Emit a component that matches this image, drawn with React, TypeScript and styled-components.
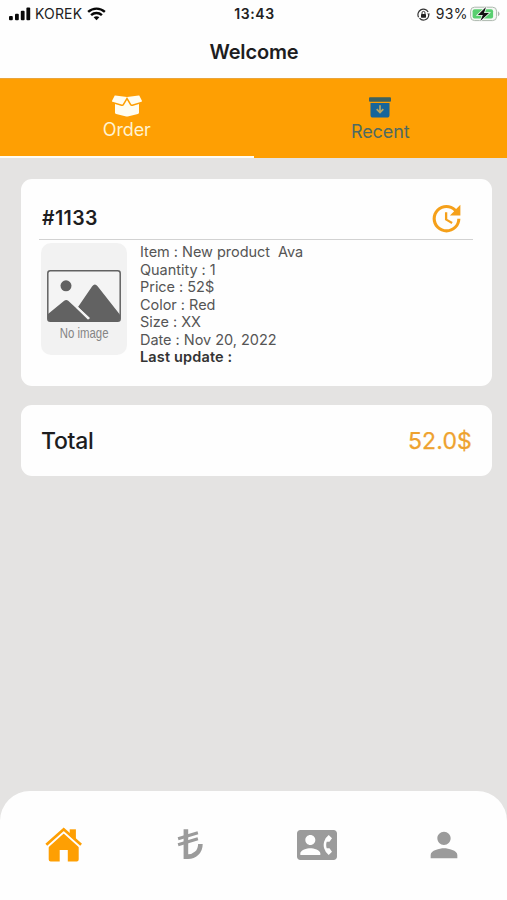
import React from "react";
import styled, { createGlobalStyle } from "styled-components";
import { MdContactPhone, MdPerson, MdUpdate } from "react-icons/md";
import { FaBoxOpen } from "react-icons/fa";

const ORANGE = "#fe9f03";

const GlobalStyle = createGlobalStyle`
  *, *::before, *::after { box-sizing: border-box; }
  body { margin: 0; background: #e4e3e2; font-family: Inter, "Liberation Sans", sans-serif; }
  svg { display: block; flex: none; }
`;

const Screen = styled.div`
  display: flex;
  flex-direction: column;
  width: 507px;
  height: 900px;
  overflow: hidden;
  background: #e4e3e2;
  color: #1d1d1f;
`;

const StatusBar = styled.div`
  display: grid;
  grid-template-columns: 1fr auto 1fr;
  align-items: center;
  height: 28px;
  padding: 0 7px 0 9px;
  background: #fefefe;
  font-size: 14px;
  line-height: 20px;
  color: #222;
`;

const StatusGroup = styled.div<{ $end?: boolean }>`
  display: flex;
  align-items: center;
  justify-content: ${(p) => (p.$end ? "flex-end" : "flex-start")};
  gap: 4px;
`;

const Carrier = styled.span`
  margin-right: 1px;
  letter-spacing: 0.15px;
`;

const Battery = styled.span`
  margin-left: 2px;
  margin-right: -2px;
  letter-spacing: 0.4px;
`;

const Clock = styled.span`
  font-weight: 600;
  letter-spacing: 0.6px;
`;

const TitleBar = styled.h1`
  display: flex;
  align-items: center;
  justify-content: center;
  height: 50px;
  margin: 0;
  padding: 0 0 2px 1px;
  background: #fefefe;
  font-size: 20px;
  font-weight: 600;
  letter-spacing: -0.15px;
`;

const Tabs = styled.div`
  display: flex;
  height: 80px;
  background: ${ORANGE};
  border-top: 1px solid #e9a53c;
`;

const Tab = styled.div<{ $active?: boolean }>`
  display: flex;
  flex: 1;
  flex-direction: column;
  align-items: center;
  padding-top: ${(p) => (p.$active ? 12 : 18)}px;
  border-bottom: ${(p) => (p.$active ? "2px solid #fffdf5" : "none")};
  color: ${(p) => (p.$active ? "#fff2cf" : "#4f6a62")};
`;

const TabLabel = styled.span<{ $offset: number }>`
  margin-top: ${(p) => p.$offset}px;
  font-size: 18px;
  line-height: 24px;
  letter-spacing: -0.1px;
`;

const Content = styled.main`
  display: flex;
  flex: 1;
  flex-direction: column;
  gap: 19px;
  padding: 21px 15px 0 21px;
`;

const Card = styled.section`
  background: #fefefe;
  border-radius: 11px;
`;

const OrderCard = styled(Card)`
  height: 207px;
  padding: 18px 19px 0 18px;
`;

const OrderHead = styled.div`
  display: flex;
  align-items: center;
  justify-content: space-between;
  height: 43px;
  padding: 0 8px 0 3px;
  border-bottom: 1px solid #d2d2d2;
`;

const OrderNumber = styled.h2`
  margin: 0;
  font-size: 19.5px;
  font-weight: 600;
  letter-spacing: 0.4px;
`;

const OrderBody = styled.div`
  display: flex;
  gap: 13px;
  padding: 3px 0 0 2px;
`;

const Thumb = styled.div`
  display: flex;
  flex: none;
  flex-direction: column;
  align-items: center;
  width: 86px;
  height: 112px;
  padding-top: 27px;
  background: #f2f2f2;
  border-radius: 10px;
`;

const ThumbLabel = styled.span`
  margin-top: 2px;
  font-family: "Liberation Sans", sans-serif;
  font-size: 15px;
  line-height: 18px;
  color: #858585;
  transform: scaleX(0.76);
  white-space: nowrap;
`;

const Details = styled.div`
  display: flex;
  flex-direction: column;
  font-size: 14.5px;
  line-height: 17.5px;
  color: #555;
`;

const Detail = styled.span<{ $strong?: boolean }>`
  white-space: pre;
  font-weight: ${(p) => (p.$strong ? 600 : 400)};
  color: ${(p) => (p.$strong ? "#333" : "inherit")};
  letter-spacing: ${(p) => (p.$strong ? 0.15 : -0.03)}px;
`;

const TotalCard = styled(Card)`
  display: flex;
  align-items: center;
  justify-content: space-between;
  height: 71px;
  padding: 0 20px;
  font-size: 23px;
`;

const TotalLabel = styled.span`
  font-weight: 500;
  letter-spacing: -0.3px;
`;

const TotalValue = styled.span`
  color: #eea22f;
  letter-spacing: 0.15px;
  -webkit-text-stroke: 0.25px currentColor;
`;

const NavBar = styled.nav`
  display: grid;
  grid-template-columns: repeat(4, 1fr);
  height: 109px;
  background: #fefefe;
  border-radius: 30px 30px 0 0;
`;

const NavItem = styled.div<{ $active?: boolean }>`
  display: flex;
  justify-content: center;
  align-items: center;
  height: 108px;
  color: ${(p) => (p.$active ? ORANGE : "#9b9b9b")};
`;

const SignalIcon = () => (
  <svg width="22" height="14" viewBox="0 0 22 14" fill="#080808">
    <rect x="0" y="9" width="3.8" height="4.2" rx="1" />
    <rect x="6" y="6.8" width="3.8" height="6.4" rx="1" />
    <rect x="11.8" y="3.8" width="3.8" height="9.4" rx="1" />
    <rect x="17.4" y="0.6" width="3.8" height="12.6" rx="1" />
  </svg>
);

const WifiIcon = () => (
  <svg width="19" height="14" viewBox="0 0 20 14" fill="none" stroke="#080808" strokeWidth="2.6">
    <path d="M1.2 4.8C6.3.2 13.7.2 18.8 4.8" />
    <path d="M4.3 8.2c3.3-3 8.1-3 11.4 0" />
    <path d="M10 13.6l-3-3.1c1.8-1.6 4.2-1.6 6 0z" fill="#080808" stroke="none" />
  </svg>
);

const LockIcon = () => (
  <svg width="13" height="13" viewBox="0 0 13 13" fill="none" stroke="#333">
    <path d="M1.6 9.2A5.2 5.2 0 0 1 11.1 4M11.7 7A5.2 5.2 0 0 1 2.5 10.2" strokeWidth="1.2" />
    <path d="M12.8 5.6H10.2L11.9 8z" fill="#333" stroke="none" />
    <rect x="4" y="6" width="5" height="3.7" rx=".6" fill="#222" stroke="none" />
    <path d="M5 6V4.9a1.5 1.5 0 0 1 3 0V6" strokeWidth="1" />
  </svg>
);

const BatteryIcon = () => (
  <svg width="30" height="16" viewBox="0 0 30 16">
    <rect x="0.6" y="1.2" width="26" height="13.4" rx="4" fill="#f5f8f5" stroke="#adb8ae" />
    <rect x="2.6" y="3.2" width="20.5" height="9.4" rx="2" fill="#59cf70" />
    <path d="M28 5.6c2 .7 2 4 0 4.7z" fill="#adb8ae" />
    <path d="M16 1 7.8 9h5L10.3 15 19 7h-5z" fill="#111" stroke="#f5f8f5" strokeWidth="1.6" paintOrder="stroke" />
  </svg>
);

const ArchiveIcon = () => (
  <svg width="22" height="21" viewBox="0 0 22 21">
    <rect x="0" y="0.3" width="22" height="4.5" rx="1" fill="#3d6260" />
    <path d="M1.5 6h19v12a2.6 2.6 0 0 1-2.6 2.6H4.1A2.6 2.6 0 0 1 1.5 18z" fill="#17659b" />
    <path d="M11 8.3v7M7.7 12.2l3.3 3.4 3.3-3.4" fill="none" stroke="#b9a663" strokeWidth="1.7" />
  </svg>
);

const NoImageIcon = () => (
  <svg width="74" height="52" viewBox="0 0 74 52">
    <rect x="0.8" y="0.8" width="72.4" height="50.4" rx="2.5" fill="#f4f4f4" stroke="#626262" strokeWidth="1.5" />
    <circle cx="19" cy="15.8" r="5.5" fill="#626262" />
    <path d="M1 44 17.2 30.7q2-1.6 4 0L41.5 49.5 43 48 31 37 45.2 16.2q2.7-3.4 5.4 0L73 44.8V49q0 2.2-2.2 2.2H3.2Q1 51.2 1 49z" fill="#626262" />
    <path d="m29.5 36.8 12 12" stroke="#f4f4f4" strokeWidth="2" />
  </svg>
);

const HomeIcon = () => (
  <svg width="38" height="36" viewBox="-0.7 0 38 36">
    <path d="M25 2.3h6.2v11H25z" fill="currentColor" />
    <path d="M4 17 19 4l15 13v15.5a2 2 0 0 1-2 2h-8.9V23H15v11.5H6a2 2 0 0 1-2-2z" fill="currentColor" />
    <path d="M1.8 20.2 19 4.8l17.2 15.4" fill="none" stroke="#fefefe" strokeWidth="2.6" />
    <path d="M1.6 17.8 19 2.3l17.4 15.5" fill="none" stroke="currentColor" strokeWidth="2.7" />
  </svg>
);

const LiraIcon = () => (
  <svg width="27" height="32" viewBox="-0.5 0.5 27 32" fill="none" stroke="currentColor">
    <path d="M8.4.8v27.3h2.2c6.4 0 12.3-4.6 12.3-12.7" strokeWidth="4.6" />
    <path d="M.6 10.3 20.4 4.2M.6 16.3l19.8-6.1" strokeWidth="3" />
  </svg>
);

const details = [
  { text: "Item : New product  Ava" },
  { text: "Quantity : 1" },
  { text: "Price : 52$" },
  { text: "Color : Red" },
  { text: "Size : XX" },
  { text: "Date : Nov 20, 2022" },
  { text: "Last update :", strong: true },
];

export default function App() {
  return (
    <>
      <GlobalStyle />
      <Screen>
        <StatusBar>
          <StatusGroup>
            <SignalIcon />
            <Carrier>KOREK</Carrier>
            <WifiIcon />
          </StatusGroup>
          <Clock>13:43</Clock>
          <StatusGroup $end>
            <LockIcon />
            <Battery>93%</Battery>
            <BatteryIcon />
          </StatusGroup>
        </StatusBar>
        <TitleBar>Welcome</TitleBar>
        <Tabs>
          <Tab $active>
            <FaBoxOpen size={30} color="#fffdf0" />
            <TabLabel $offset={-3}>Order</TabLabel>
          </Tab>
          <Tab>
            <ArchiveIcon />
            <TabLabel $offset={2}>Recent</TabLabel>
          </Tab>
        </Tabs>
        <Content>
          <OrderCard>
            <OrderHead>
              <OrderNumber>#1133</OrderNumber>
              <MdUpdate size={37} color="#f5a01a" />
            </OrderHead>
            <OrderBody>
              <Thumb>
                <NoImageIcon />
                <ThumbLabel>No image</ThumbLabel>
              </Thumb>
              <Details>
                {details.map((d) => (
                  <Detail key={d.text} $strong={d.strong}>
                    {d.text}
                  </Detail>
                ))}
              </Details>
            </OrderBody>
          </OrderCard>
          <TotalCard>
            <TotalLabel>Total</TotalLabel>
            <TotalValue>52.0$</TotalValue>
          </TotalCard>
        </Content>
        <NavBar>
          <NavItem $active>
            <HomeIcon />
          </NavItem>
          <NavItem>
            <LiraIcon />
          </NavItem>
          <NavItem>
            <MdContactPhone size={40} />
          </NavItem>
          <NavItem>
            <MdPerson size={40} />
          </NavItem>
        </NavBar>
      </Screen>
    </>
  );
}
